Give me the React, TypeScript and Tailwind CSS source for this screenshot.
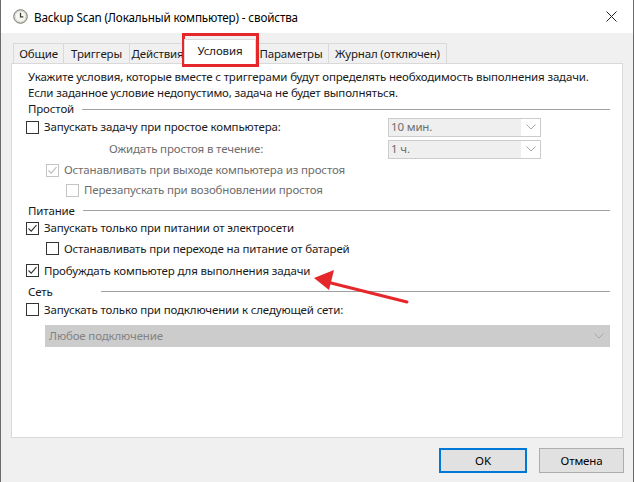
import React from "react";

const font = { fontFamily: '"Noto Sans", "Liberation Sans", sans-serif' };

function CheckBox({
  checked,
  disabled,
}: {
  checked?: boolean;
  disabled?: boolean;
}): JSX.Element {
  const edge = disabled ? "border-[#c4c4c4]" : "border-[#333333]";
  return (
    <span
      className={`flex h-[13px] w-[13px] shrink-0 items-center justify-center border bg-white ${edge}`}
    >
      {checked && (
        <svg width="11" height="11" viewBox="0 0 11 11">
          <path
            d="M1.5 5.5 L4.2 8.2 L9.5 2.2"
            fill="none"
            stroke={disabled ? "#bcbcbc" : "#333333"}
            strokeWidth="1.1"
          />
        </svg>
      )}
    </span>
  );
}

function CheckRow({
  label,
  checked,
  disabled,
  indent,
  className,
}: {
  label: string;
  checked?: boolean;
  disabled?: boolean;
  indent: string;
  className: string;
}): JSX.Element {
  return (
    <div className={`flex items-center gap-[5px] ${indent} ${className}`}>
      <CheckBox checked={checked} disabled={disabled} />
      <span className={disabled ? "text-[#6d6d6d]" : "text-[#1a1a1a]"}>
        {label}
      </span>
    </div>
  );
}

function GroupTitle({
  title,
  line,
  className,
}: {
  title: string;
  line: string;
  className: string;
}): JSX.Element {
  return (
    <div className={`flex items-center ${className}`}>
      <span className={`shrink-0 ${line}`}>{title}</span>
      <span className="h-px grow bg-[#a0a0a0]" />
    </div>
  );
}

function Chevron({ color }: { color: string }): JSX.Element {
  return (
    <svg width="10" height="6" viewBox="0 0 10 6">
      <path d="M0.5 0.5 L5 5 L9.5 0.5" fill="none" stroke={color} />
    </svg>
  );
}

function SmallSelect({ value }: { value: string }): JSX.Element {
  return (
    <div className="flex h-[19px] w-[153px] items-center border border-[#cccccc] bg-white">
      <div className="flex h-full grow items-center bg-[#efefef] pl-[2px] text-[#6d6d6d]">
        {value}
      </div>
      <div className="flex w-[19px] items-center justify-center">
        <Chevron color="#a8a8a8" />
      </div>
    </div>
  );
}

function Tab({
  label,
  width,
}: {
  label: string;
  width: string;
}): JSX.Element {
  return (
    <div
      className={`flex h-[20px] items-center justify-center border border-b-0 border-l-0 border-[#d9d9d9] bg-[#f0f0f0] first:border-l ${width}`}
    >
      {label}
    </div>
  );
}

export default function App(): JSX.Element {
  return (
    <div
      className="relative flex h-[482px] w-[634px] flex-col overflow-hidden border-x border-[#6b6b6b] bg-[#f0f0f0] text-[11.5px] leading-[16px] tracking-[-0.15px] text-[#1a1a1a]"
      style={font}
    >
      {/* title bar */}
      <div className="flex h-[33px] shrink-0 items-center bg-white pl-[12px] pr-[12px]">
        <svg width="15" height="15" viewBox="0 0 15 15">
          <circle cx="7.5" cy="7.5" r="6.8" fill="#d8d8d0" stroke="#7d7d72" />
          <circle cx="7.5" cy="7.5" r="5" fill="#f7f7f2" />
          <path d="M7.5 3.8 V7.8 H10.3" fill="none" stroke="#3d3d35" strokeWidth="1.2" />
        </svg>
        <span className="ml-[6px] grow text-[11.7px] text-black">
          Backup Scan (Локальный компьютер) - свойства
        </span>
        <svg width="11" height="11" viewBox="0 0 11 11" className="mr-[4px]">
          <path d="M0.5 0.5 L10.5 10.5 M10.5 0.5 L0.5 10.5" stroke="#222" />
        </svg>
      </div>

      {/* tabs */}
      <div className="ml-[12px] mt-[10px] flex h-[20px] shrink-0 items-end">
        <Tab label="Общие" width="w-[51px]" />
        <Tab label="Триггеры" width="w-[66px]" />
        <Tab label="Действия" width="w-[56px]" />
        <div className="relative z-10 -mx-[2px] mb-[-1px] flex h-[25px] w-[72px] items-center justify-center border border-b-0 border-[#d9d9d9] bg-white pb-[2px]">
          Условия
        </div>
        <Tab label="Параметры" width="w-[75px]" />
        <Tab label="Журнал (отключен)" width="w-[118px]" />
      </div>

      {/* panel */}
      <div className="mx-[10px] flex h-[375px] shrink-0 flex-col border border-[#d9d9d9] bg-white pl-[16px] pr-[12px] pt-[5px]">
        <div className="whitespace-nowrap">
          Укажите условия, которые вместе с триггерами будут определять
          необходимость выполнения задачи.
        </div>
        <div>Если заданное условие недопустимо, задача не будет выполняться.</div>
        <GroupTitle title="Простой" line="mr-[8px]" className="h-[16px]" />

        <div className="ml-[-2px] flex h-[20px] items-center justify-between pr-[69px]">
          <CheckRow
            label="Запускать задачу при простое компьютера:"
            indent=""
            className=""
          />
          <SmallSelect value="10 мин." />
        </div>
        <div className="mt-[2px] flex h-[20px] items-center justify-between pr-[69px]">
          <span className="ml-[81px] text-[#6d6d6d]">
            Ожидать простоя в течение:
          </span>
          <SmallSelect value="1 ч." />
        </div>
        <CheckRow
          label="Останавливать при выходе компьютера из простоя"
          checked
          disabled
          indent="ml-[18px]"
          className="mt-[1px] h-[20px]"
        />
        <CheckRow
          label="Перезапускать при возобновлении простоя"
          disabled
          indent="ml-[38px]"
          className="h-[20px]"
        />

        <GroupTitle title="Питание" line="mr-[8px]" className="mt-[2px] h-[17px]" />
        <CheckRow
          label="Запускать только при питании от электросети"
          checked
          indent="ml-[-2px]"
          className="h-[18px]"
        />
        <CheckRow
          label="Останавливать при переходе на питание от батарей"
          indent="ml-[18px]"
          className="mt-[1px] h-[21px]"
        />
        <CheckRow
          label="Пробуждать компьютер для выполнения задачи"
          checked
          indent="ml-[-2px]"
          className="mt-[1px] h-[21px]"
        />
        <GroupTitle title="Сеть" line="mr-[48px]" className="h-[21px]" />
        <CheckRow
          label="Запускать только при подключении к следующей сети:"
          indent="ml-[-2px]"
          className="mt-[-3px] h-[21px]"
        />
        <div className="ml-[17px] mt-[5px] flex h-[22px] w-[565px] items-center justify-between bg-[#cccccc] pl-[4px] pr-[6px] text-[#838383]">
          <span>Любое подключение</span>
          <Chevron color="#a8a8a8" />
        </div>
      </div>

      {/* buttons */}
      <div className="mr-[9px] mt-[10px] flex justify-end gap-[12px]">
        <button className="h-[25px] w-[88px] border-2 border-[#0078d7] bg-[#e1e1e1] text-black">
          OK
        </button>
        <button className="h-[25px] w-[85px] border border-[#adadad] bg-[#e1e1e1] text-black">
          Отмена
        </button>
      </div>

      {/* annotation: red box around the active tab */}
      <div className="absolute left-[181px] top-[33px] h-[34px] w-[77px] border-[3px] border-[#e5262b]" />

      {/* annotation: red arrow */}
      <svg
        className="absolute left-0 top-0"
        width="634"
        height="482"
        viewBox="0 0 634 482"
      >
        <line
          x1="406"
          y1="302"
          x2="326"
          y2="282"
          stroke="#e5262b"
          strokeWidth="3"
          strokeLinecap="round"
        />
        <polygon points="313,278 333,270 328,290" fill="#e5262b" />
      </svg>
    </div>
  );
}
